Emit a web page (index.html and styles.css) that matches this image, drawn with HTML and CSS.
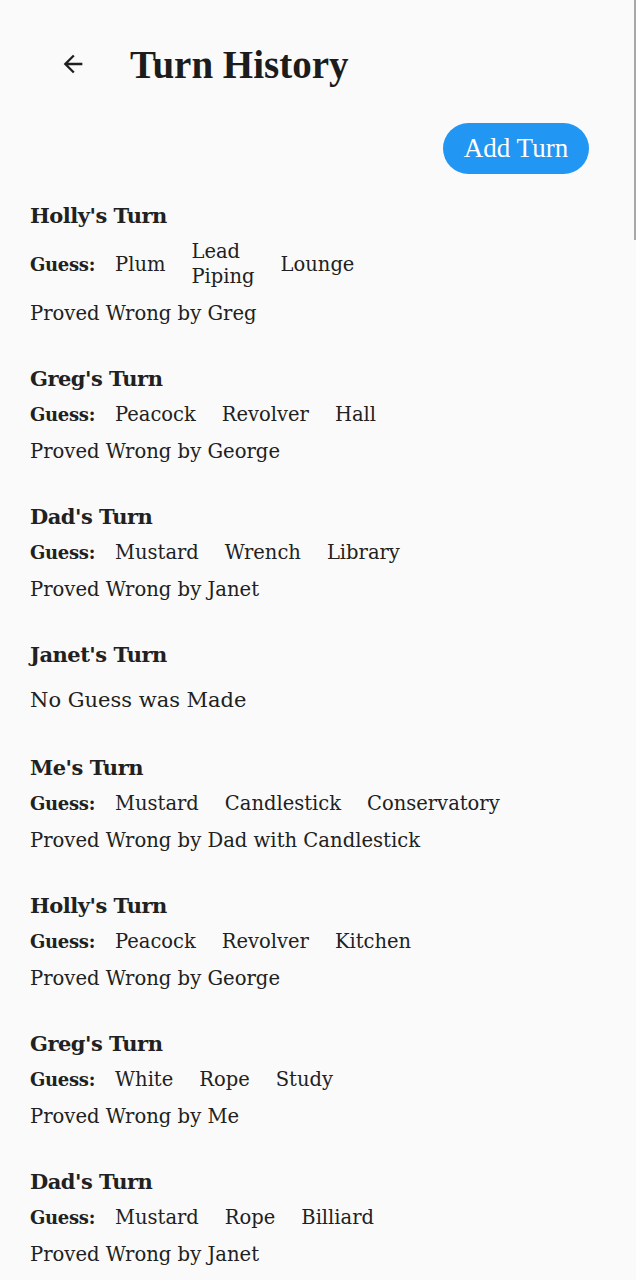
FILE: index.html
```html
<!doctype html>
<html lang="en">
<head>
    <title>Turn History</title>
    <meta charset="utf-8">
    <meta name="viewport" content="width=device-width, initial-scale=1">
    <link rel="stylesheet" href="styles.css">
</head>
<body>
<div class="scroll-thumb"></div>
<header class="top-bar">
    <button class="back-btn" aria-label="Back">
        <svg width="28" height="28" viewBox="0 0 24 24"><path d="M20 11H7.83l5.59-5.59L12 4l-8 8 8 8 1.41-1.41L7.83 13H20v-2z" fill="#1f1f1f"/></svg>
    </button>
    <h1 class="title">Turn History</h1>
</header>

<div class="actions">
    <a href="#" class="add-btn">Add Turn</a>
</div>

<main class="turn-list">
    <section class="turn">
        <h2>Holly's Turn</h2>
        <div class="guess"><b>Guess:</b><span>Plum</span><span class="narrow">Lead Piping</span><span>Lounge</span></div>
        <p class="result">Proved Wrong by Greg</p>
    </section>
    <section class="turn">
        <h2>Greg's Turn</h2>
        <div class="guess"><b>Guess:</b><span>Peacock</span><span>Revolver</span><span>Hall</span></div>
        <p class="result">Proved Wrong by George</p>
    </section>
    <section class="turn">
        <h2>Dad's Turn</h2>
        <div class="guess"><b>Guess:</b><span>Mustard</span><span>Wrench</span><span>Library</span></div>
        <p class="result">Proved Wrong by Janet</p>
    </section>
    <section class="turn">
        <h2>Janet's Turn</h2>
        <p class="no-guess">No Guess was Made</p>
    </section>
    <section class="turn">
        <h2>Me's Turn</h2>
        <div class="guess"><b>Guess:</b><span>Mustard</span><span>Candlestick</span><span>Conservatory</span></div>
        <p class="result">Proved Wrong by Dad with Candlestick</p>
    </section>
    <section class="turn">
        <h2>Holly's Turn</h2>
        <div class="guess"><b>Guess:</b><span>Peacock</span><span>Revolver</span><span>Kitchen</span></div>
        <p class="result">Proved Wrong by George</p>
    </section>
    <section class="turn">
        <h2>Greg's Turn</h2>
        <div class="guess"><b>Guess:</b><span>White</span><span>Rope</span><span>Study</span></div>
        <p class="result">Proved Wrong by Me</p>
    </section>
    <section class="turn">
        <h2>Dad's Turn</h2>
        <div class="guess"><b>Guess:</b><span>Mustard</span><span>Rope</span><span>Billiard</span></div>
        <p class="result">Proved Wrong by Janet</p>
    </section>
</main>
</body>
</html>
```

FILE: styles.css
```css
html { height: 100%; }
body {
    margin: 0;
    padding: 0;
    background: #fafafa;
    color: #212121;
    font-family: "DejaVu Serif", serif;
    overflow: hidden;
}
.scroll-thumb {
    position: fixed;
    top: 0;
    right: 0;
    width: 2px;
    height: 240px;
    background: #a8a8a8;
}
.top-bar {
    display: flex;
    align-items: center;
    height: 132px;
    padding: 0 0 0 59px;
    box-sizing: border-box;
    margin-bottom: -7px;
    margin-top: -2px;
}
.back-btn {
    display: flex;
    align-items: center;
    justify-content: center;
    width: 28px;
    height: 28px;
    padding: 0;
    border: none;
    background: none;
}
.title {
    margin: 0 0 0 43px;
    font-family: "Liberation Serif", serif;
    font-size: 39px;
    font-weight: bold;
    color: #1c1c1c;
}
.actions {
    display: flex;
    justify-content: flex-end;
    padding-right: 47px;
}
.add-btn {
    display: inline-block;
    width: 146px;
    height: 51px;
    line-height: 51px;
    border-radius: 26px;
    background: #2196f3;
    color: #fff;
    text-align: center;
    text-decoration: none;
    font-family: "Liberation Serif", serif;
    font-size: 27px;
}
.turn-list {
    padding: 27px 0 0 30px;
}
.turn {
    margin-bottom: 38px;
}
.turn h2 {
    margin: 0;
    font-size: 21px;
    line-height: 30px;
    font-weight: bold;
    letter-spacing: -0.5px;
}
.guess {
    display: flex;
    align-items: center;
    margin-top: 8px;
    font-size: 19.5px;
    line-height: 25px;
}
.guess b {
    margin-right: 20px;
    font-size: 18px;
    letter-spacing: -0.3px;
}
.guess span {
    margin-right: 26px;
}
.guess .narrow {
    width: min-content;
}
.result {
    margin: 12px 0 0;
    font-size: 19.6px;
    line-height: 25px;
}
.no-guess {
    margin: 15px 0 6px;
    font-size: 21px;
    line-height: 30px;
}
```
